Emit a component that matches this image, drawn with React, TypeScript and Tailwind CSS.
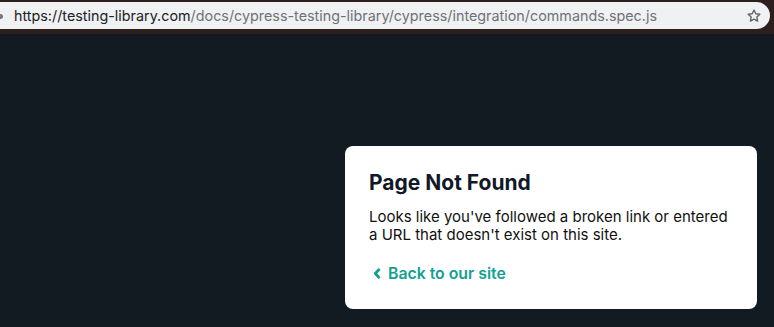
import React from 'react';

const StarIcon: React.FC = () => (
  <svg width="16" height="16" viewBox="0 0 24 24" fill="none" stroke="#5f6368" strokeWidth="2" strokeLinejoin="round">
    <path d="M12 3l2.7 5.6 6.1.8-4.5 4.2 1.1 6.1L12 16.8 6.6 19.7l1.1-6.1L3.2 9.4l6.1-.8z" />
  </svg>
);

const App: React.FC = () => {
  return (
    <div className="w-[774px] h-[327px] bg-[#121b21] flex flex-col overflow-hidden" style={{ fontFamily: 'Inter, "Noto Sans", sans-serif' }}>
      {/* Barra del navegador */}
      <div className="bg-[#2e1f1f] pt-[2px] pb-[5px] pr-[4px] shrink-0">
        <div className="h-[27px] bg-[#f0f1f3] rounded-r-[14px] flex items-center relative">
          <span className="absolute left-0 top-[12px] w-[3px] h-[5px] bg-[#7a7a7a] rounded-r-sm"></span>
          <div className="pl-[14px] text-[14.35px] flex-1 whitespace-nowrap">
            <span className="text-[#202124]">https://testing-library.com</span>
            <span className="text-[#6f7176]">/docs/cypress-testing-library/cypress/integration/commands.spec.js</span>
          </div>
          <div className="pr-[8px] flex items-center">
            <StarIcon />
          </div>
        </div>
      </div>

      {/* Contenido */}
      <div className="flex-1 flex justify-end items-start pt-[112px] pr-[17px]">
        <div className="w-[412px] h-[163px] bg-white rounded-[8px] px-[24px] pt-[23px]">
          <h1 className="text-[21px] leading-[27px] font-bold text-[#111827]">Page Not Found</h1>
          <p className="mt-[12px] text-[15px] leading-[18px] text-[#111]">
            Looks like you've followed a broken link or entered a URL that doesn't exist on this site.
          </p>
          <a href="#" className="mt-[18px] flex items-center gap-[7px] text-[15.8px] font-semibold text-[#12a191]">
            <svg className="ml-[4px]" width="8" height="11" viewBox="0 0 8 11" fill="none" stroke="#12a191" strokeWidth="2.8" strokeLinecap="round" strokeLinejoin="round">
              <path d="M5.8 1.8L2.3 5.5l3.5 3.7" />
            </svg>
            Back to our site
          </a>
        </div>
      </div>
    </div>
  );
};

export default App;
